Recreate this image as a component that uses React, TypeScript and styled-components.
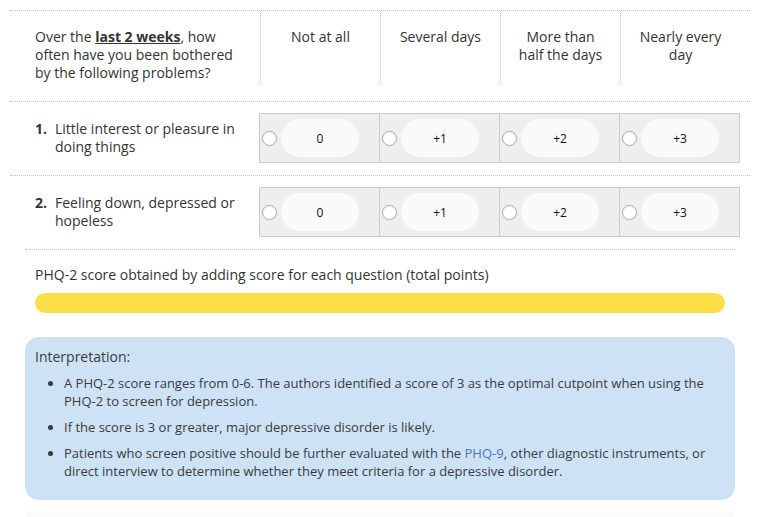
import styled, { createGlobalStyle } from "styled-components";

const GlobalStyle = createGlobalStyle`
    body{
        margin:0;
        background:#fff;
        font-family:'Open Sans', 'Liberation Sans', sans-serif;
        color:#333;
    }
`;

const Page = styled.div`
    width:740px;
    padding:10px 7px 0 10px;
`;

const Grid = styled.div`
    display:grid;
    grid-template-columns:250px repeat(4, 120px) 1fr;
    align-items:center;
`;

const Header = styled(Grid)`
    border-top:1px dotted #c4c4c4;
    border-bottom:1px dotted #c4c4c4;
    align-items:start;
    padding-bottom:17px;
`;

const HeaderQuestion = styled.div`
    padding:17px 0 0 25px;
    font-size:14px;
    line-height:18px;
    width:210px;

    b{
        text-decoration:underline;
        font-weight:700;
    }
`;

const HeaderCell = styled.div`
    border-left:1px dotted #c4c4c4;
    height:73px;
    box-sizing:border-box;
    padding:17px 14px 0;
    font-size:14px;
    line-height:18px;
    text-align:center;
`;

const Row = styled(Grid)<{ $last?: boolean }>`
    padding:11px 0 12px;
    border-bottom:1px dotted #c4c4c4;
    margin:${p => p.$last ? "0 15px" : "0"};
    grid-template-columns:${p => p.$last ? "235px repeat(4, 120px) 1fr" : "250px repeat(4, 120px) 1fr"};
`;

const Question = styled.div<{ $last?: boolean }>`
    display:flex;
    gap:8px;
    padding-left:${p => p.$last ? "10px" : "25px"};
    font-size:14px;
    line-height:18px;

    b{ font-weight:700; }
    span{ width:185px; }
`;

const Option = styled.label`
    display:flex;
    align-items:center;
    height:50px;
    box-sizing:border-box;
    background:#eeeeee;
    border:1px solid #cccccc;
    margin-left:-1px;
    padding-left:2px;
`;

const Radio = styled.span`
    width:13px;
    height:13px;
    border-radius:50%;
    border:1px solid #a8a8a8;
    background:#fff;
    flex:none;
`;

const Pill = styled.span`
    margin-left:4px;
    width:78px;
    height:38px;
    border-radius:19px;
    background:#fafafa;
    display:flex;
    align-items:center;
    justify-content:center;
    font-size:12px;
    color:#111;
`;

const Score = styled.div`
    padding:16px 25px 0;
`;

const ScoreLabel = styled.div`
    font-size:14px;
    line-height:18px;
    color:#333;
`;

const ScoreBar = styled.div`
    margin-top:9px;
    height:20px;
    border-radius:10px;
    background:#fdde44;
`;

const Interpretation = styled.div`
    margin:24px 15px 0;
    background:#cee2f6;
    border-radius:14px;
    padding:11px 10px 20px;
    font-size:13px;
    line-height:18px;
    color:#3a3a3a;
`;

const Title = styled.div`
    font-size:14px;
`;

const List = styled.ul`
    margin:8px 0 0;
    padding-left:29px;

    li{
        margin-bottom:8px;
        &:last-child{ margin-bottom:0; }
    }

    a{
        color:#4a73c4;
        text-decoration:none;
    }
`;

const NextBlock = styled.div`
    margin:11px 15px 0;
    height:20px;
    background:linear-gradient(#fbfbfb, #f6f6f6);
`;

const headers = ["Not at all", "Several days", "More than half the days", "Nearly every day"];
const scores = ["0", "+1", "+2", "+3"];
const questions = ["Little interest or pleasure in doing things", "Feeling down, depressed or hopeless"];

export default function App() {
    return (
        <Page>
            <GlobalStyle />
            <Header>
                <HeaderQuestion>
                    Over the <b>last 2 weeks</b>, how often have you been bothered by the following problems?
                </HeaderQuestion>
                {headers.map(h => <HeaderCell key={h}>{h}</HeaderCell>)}
            </Header>

            {questions.map((q, i) => (
                <Row key={q} $last={i === questions.length - 1}>
                    <Question $last={i === questions.length - 1}>
                        <b>{i + 1}.</b>
                        <span>{q}</span>
                    </Question>
                    {scores.map(s => (
                        <Option key={s}>
                            <Radio />
                            <Pill>{s}</Pill>
                        </Option>
                    ))}
                </Row>
            ))}

            <Score>
                <ScoreLabel>PHQ-2 score obtained by adding score for each question (total points)</ScoreLabel>
                <ScoreBar />
            </Score>

            <Interpretation>
                <Title>Interpretation:</Title>
                <List>
                    <li>A PHQ-2 score ranges from 0-6. The authors identified a score of 3 as the optimal cutpoint when using the PHQ-2 to screen for depression.</li>
                    <li>If the score is 3 or greater, major depressive disorder is likely.</li>
                    <li>Patients who screen positive should be further evaluated with the <a href="#">PHQ-9</a>, other diagnostic instruments, or direct interview to determine whether they meet criteria for a depressive disorder.</li>
                </List>
            </Interpretation>
            <NextBlock />
        </Page>
    );
}
